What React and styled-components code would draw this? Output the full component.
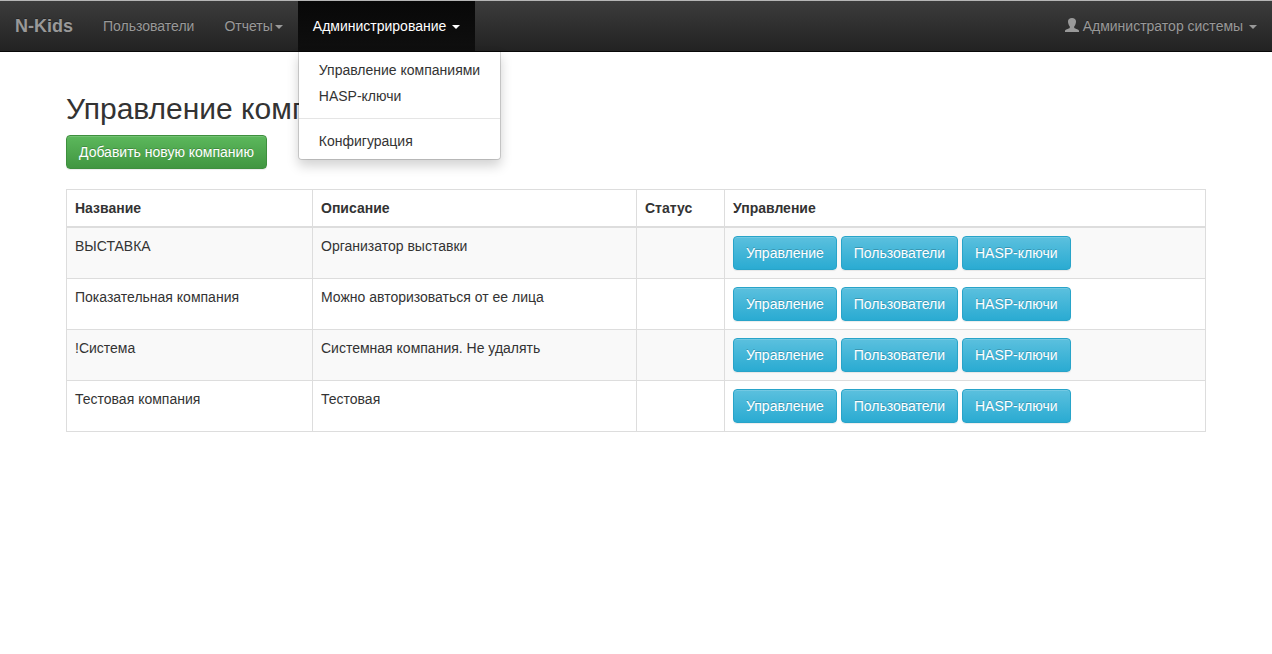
import React from "react";
import styled, { createGlobalStyle } from "styled-components";

const companies = [
  { name: "ВЫСТАВКА", description: "Организатор выставки" },
  { name: "Показательная компания", description: "Можно авторизоваться от ее лица" },
  { name: "!Система", description: "Системная компания. Не удалять" },
  { name: "Тестовая компания", description: "Тестовая" },
];

function UserIcon() {
  return (
    <Icon viewBox="0 0 14 14">
      <path d="M7 0C4.500 0 3 1.300 3 3.200c0 .9.100 1.600.300 2.300.3 1.200.8 2.200 1.500 2.900v1.200c0 .3-.2.5-.5.7L.8 11.800C.2 12.100 0 12.400 0 12.900V14h14v-1.100c0-.5-.2-.8-.8-1.100L9.700 10.300c-.3-.2-.5-.4-.5-.7V8.400c.7-.7 1.200-1.700 1.500-2.900.2-.7.3-1.400.3-2.300C11 1.300 9.500 0 7 0z" />
    </Icon>
  );
}

function Navbar() {
  return (
    <NavbarBox>
      <Brand href="#">N-Kids</Brand>
      <Nav>
        <NavItem>
          <NavLink href="#">Пользователи</NavLink>
        </NavItem>
        <NavItem>
          <NavLink href="#">
            Отчеты
            <Caret />
          </NavLink>
        </NavItem>
        <NavItem>
          <NavLink href="#" $open>
            Администрирование <Caret />
          </NavLink>
          <Dropdown>
            <li>
              <DropdownLink href="#">Управление компаниями</DropdownLink>
            </li>
            <li>
              <DropdownLink href="#">HASP-ключи</DropdownLink>
            </li>
            <Divider />
            <li>
              <DropdownLink href="#">Конфигурация</DropdownLink>
            </li>
          </Dropdown>
        </NavItem>
      </Nav>
      <Nav $right>
        <NavItem>
          <NavLink href="#">
            <UserIcon /> Администратор системы <Caret />
          </NavLink>
        </NavItem>
      </Nav>
    </NavbarBox>
  );
}

function CompaniesTable() {
  return (
    <Table>
      <colgroup>
        <Col $width={246} />
        <Col $width={324} />
        <Col $width={88} />
        <Col />
      </colgroup>
      <thead>
        <tr>
          <th>Название</th>
          <th>Описание</th>
          <th>Статус</th>
          <th>Управление</th>
        </tr>
      </thead>
      <tbody>
        {companies.map((company) => (
          <tr key={company.name}>
            <td>{company.name}</td>
            <td>{company.description}</td>
            <td></td>
            <td>
              <Button>Управление</Button> <Button>Пользователи</Button>{" "}
              <Button>HASP-ключи</Button>
            </td>
          </tr>
        ))}
      </tbody>
    </Table>
  );
}

function App() {
  return (
    <>
      <GlobalStyle />
      <Navbar />
      <Container>
        <Title>Управление компаниями</Title>
        <Button $success>Добавить новую компанию</Button>
        <CompaniesTable />
      </Container>
    </>
  );
}

const GlobalStyle = createGlobalStyle`
  * {
    box-sizing: border-box;
  }
  body {
    margin: 0;
    border-top: 1px solid #b6b6b6;
    background: #fff;
    color: #333;
    font-family: "Liberation Sans", Arial, sans-serif;
    font-size: 14px;
    line-height: 1.428571429;
  }
  a {
    text-decoration: none;
  }
`;

const NavbarBox = styled.nav`
  display: flex;
  height: 51px;
  margin-bottom: 20px;
  border-bottom: 1px solid #080808;
  background: linear-gradient(to bottom, #3c3c3c 0%, #222 100%);
`;

const Brand = styled.a`
  padding: 15px;
  color: #999;
  font-size: 18px;
  font-weight: bold;
  line-height: 20px;
  text-shadow: 0 -1px 0 rgba(0, 0, 0, 0.25);
`;

const Nav = styled.ul`
  display: flex;
  margin: 0;
  margin-left: ${(props) => (props.$right ? "auto" : "0")};
  padding: 0;
  list-style: none;
`;

const NavItem = styled.li`
  position: relative;
`;

const NavLink = styled.a`
  display: block;
  padding: 15px;
  background: ${(props) =>
    props.$open ? "linear-gradient(to bottom, #080808, #0f0f0f)" : "transparent"};
  color: ${(props) => (props.$open ? "#fff" : "#999")};
  line-height: 20px;
  white-space: nowrap;
  text-shadow: 0 -1px 0 rgba(0, 0, 0, 0.25);
`;

const Caret = styled.b`
  display: inline-block;
  width: 0;
  height: 0;
  margin-left: 2px;
  vertical-align: middle;
  border-top: 4px solid;
  border-right: 4px solid transparent;
  border-left: 4px solid transparent;
`;

const Icon = styled.svg`
  display: inline-block;
  width: 14px;
  height: 14px;
  vertical-align: -1px;
  fill: currentColor;
`;

const Dropdown = styled.ul`
  position: absolute;
  top: 100%;
  left: 0;
  z-index: 10;
  min-width: 160px;
  margin: 0;
  padding: 5px 0;
  list-style: none;
  background: #fff;
  background-clip: padding-box;
  border: 1px solid rgba(0, 0, 0, 0.15);
  border-radius: 0 0 4px 4px;
  box-shadow: 0 6px 12px rgba(0, 0, 0, 0.175);
`;

const DropdownLink = styled.a`
  display: block;
  padding: 3px 20px;
  color: #333;
  white-space: nowrap;
`;

const Divider = styled.li`
  height: 1px;
  margin: 9px 0;
  background: #e5e5e5;
`;

const Container = styled.div`
  width: 1170px;
  margin: 0 auto;
  padding: 20px 15px 0;
`;

const Title = styled.h2`
  margin: 0 0 10px;
  font-size: 30px;
  font-weight: 500;
  line-height: 1.1;
`;

const Button = styled.button`
  display: inline-block;
  padding: 6px 12px;
  border: 1px solid ${(props) => (props.$success ? "#3e8f3e" : "#28a4c9")};
  border-radius: 4px;
  background: ${(props) =>
    props.$success
      ? "linear-gradient(to bottom, #5cb85c, #419641)"
      : "linear-gradient(to bottom, #5bc0de, #2aabd2)"};
  background-repeat: repeat-x;
  box-shadow: inset 0 1px 0 rgba(255, 255, 255, 0.15),
    0 1px 1px rgba(0, 0, 0, 0.075);
  color: #fff;
  font-family: inherit;
  font-size: 14px;
  line-height: 1.428571429;
  text-shadow: 0 -1px 0 rgba(0, 0, 0, 0.2);
  vertical-align: middle;
  white-space: nowrap;
  cursor: pointer;
`;

const Table = styled.table`
  width: 100%;
  margin-top: 20px;
  table-layout: fixed;
  border-collapse: collapse;
  border: 1px solid #ddd;

  th,
  td {
    padding: 8px;
    border: 1px solid #ddd;
    text-align: left;
    vertical-align: top;
  }
  th {
    border-bottom-width: 2px;
  }
  tbody tr:nth-child(odd) {
    background: #f9f9f9;
  }
`;

const Col = styled.col`
  width: ${(props) => (props.$width ? props.$width + "px" : "auto")};
`;

export default App;
